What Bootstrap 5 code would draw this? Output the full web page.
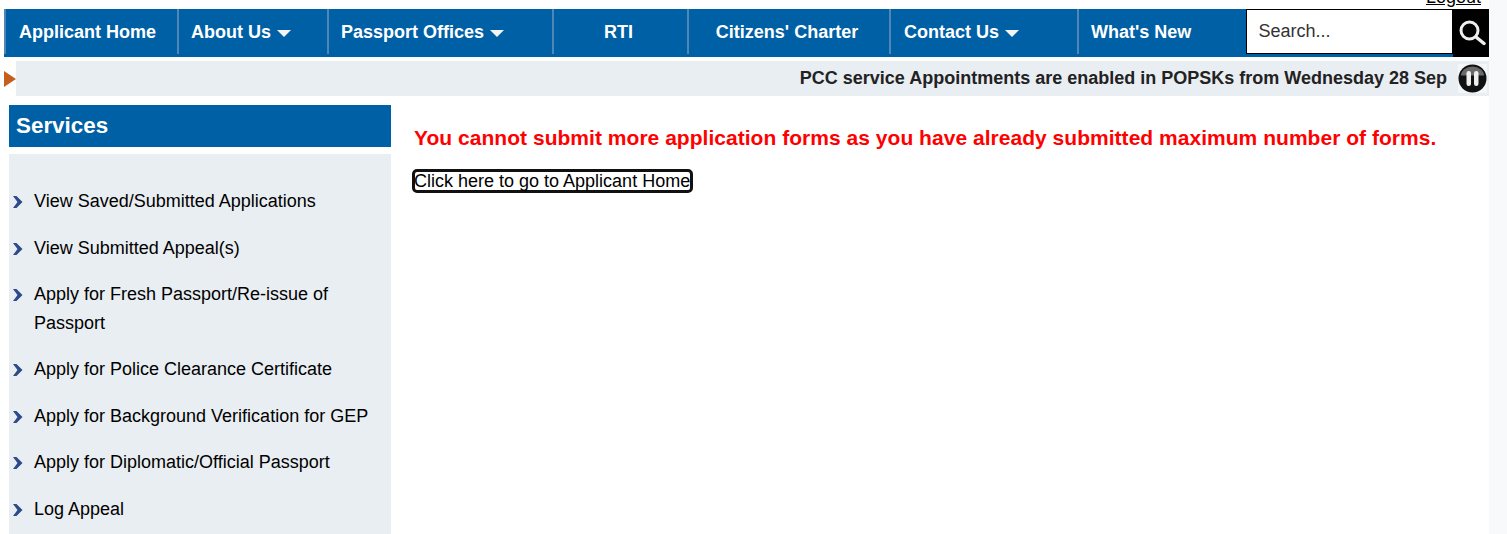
<!DOCTYPE html>
<html lang="en"><head><meta charset="utf-8"><title>Passport Seva</title>
<link href="https://cdn.jsdelivr.net/npm/bootstrap@5.3.0/dist/css/bootstrap.min.css" rel="stylesheet">
<style>
html,body{height:534px;overflow:hidden;background:#fff}
body{font-family:"Liberation Sans",Arial,sans-serif;color:#000;font-size:18px}
.gutter-strip{width:18px;background:#f8f9fa;flex:none}
.page-shell{width:1507px;height:534px;overflow:hidden}
.page-main{width:1489px;padding-left:4px;flex:none}
.logout-row{height:9px;position:relative}
.logout-link{position:absolute;right:8px;top:-14px;font-size:18px;line-height:22px;color:#000}
.top-nav{height:48px;background:#0060a5;align-items:flex-start}
.nav-cell{height:45px;display:flex;align-items:center;padding-left:13px;padding-top:1px;color:#fff;font-weight:700;font-size:18px;border-right:2px solid #4f86b8;text-decoration:none;white-space:nowrap;flex:none}
.nav-cell.centered{justify-content:center;padding-left:0;padding-right:4px}
.w1{width:175px;border-left:2px solid #4f86b8}.w2{width:150px;padding-left:12px}.w3{width:225px;padding-left:12px}.w4{width:135px}.w5{width:202px}.w6{width:188px}.w7{width:167px;border-right:0;padding-left:12px}
.caret-mark{display:inline-block;margin-left:6px;margin-top:2px;width:0;height:0;border-left:7.5px solid transparent;border-right:7.5px solid transparent;border-top:7px solid #f4f4f4}
.search-box{width:207px;height:45px;border:1px solid #000;background:#fff;padding:0 11.500px;font-size:18px;color:#333;flex:none;line-height:41px;outline:0;border-radius:0}
.search-box::placeholder{color:#333;opacity:1}
.search-btn{width:36px;height:48px;background:#000;flex:none;border:0;padding:0 0 1px 1px;display:flex;align-items:center;justify-content:center}
.ticker-row{margin-top:4px;height:35px}
.ticker-arrow{width:12px;flex:none;display:flex;align-items:center}
.ticker-body{background:#e9eef2;flex:1;height:35px;font-weight:700;color:#222;font-size:18px;padding-right:2px}
.pause-icon{margin-left:11px;flex:none}
.content-row{margin-top:9px;padding-left:5px}
.side-col{width:382px;flex:none}
.side-head{height:42px;background:#0060a5;color:#fff;font-weight:700;font-size:22.400px;line-height:41px;padding-left:7px}
.side-panel{margin-top:7px;background:#e9eef2;height:400px;padding-top:32.500px}
.side-item{position:relative;padding-left:25px;line-height:29px;color:#000;margin-bottom:17.600px;font-size:18px}
.side-item:first-child{margin-bottom:18.200px}
.side-item:nth-child(2){margin-bottom:17px}
.side-item svg{position:absolute;left:3px;top:8px}
.msg-col{padding-left:23px;padding-top:20px}
.err-msg{color:#f00;font-weight:700;font-size:21px;line-height:26px;letter-spacing:.03px;margin:0}
.home-link{display:inline-block;margin:18px 0 0 -2px;color:#000;text-decoration:none;border:3px solid #111;border-radius:5px;line-height:18px;font-size:18px;padding:0;height:24px;white-space:nowrap;text-indent:-1px}
</style></head>
<body>
<div class="page-shell d-flex">
<div class="page-main">
  <div class="logout-row"><a href="#" class="logout-link">Logout</a></div>
  <nav class="top-nav d-flex">
    <a href="#" class="nav-cell w1">Applicant Home</a>
    <a href="#" class="nav-cell w2">About Us<span class="caret-mark"></span></a>
    <a href="#" class="nav-cell w3">Passport Offices<span class="caret-mark"></span></a>
    <a href="#" class="nav-cell centered w4">RTI</a>
    <a href="#" class="nav-cell centered w5">Citizens' Charter</a>
    <a href="#" class="nav-cell w6">Contact Us<span class="caret-mark"></span></a>
    <a href="#" class="nav-cell w7">What's New</a>
    <input class="search-box" type="text" placeholder="Search...">
    <button class="search-btn" type="button" aria-label="Search">
      <svg width="28" height="26" viewBox="0 0 28 26"><circle cx="11.500" cy="10.500" r="8.500" fill="none" stroke="#eee" stroke-width="3"/><path d="M18 17l8 6.500" stroke="#eee" stroke-width="3.500" stroke-linecap="round"/></svg>
    </button>
  </nav>
  <div class="ticker-row d-flex">
    <div class="ticker-arrow"><svg width="12" height="16" viewBox="0 0 12 16"><path d="M0 0l12 8-12 8z" fill="#c55f1e"/></svg></div>
    <div class="ticker-body d-flex align-items-center justify-content-end">
      <span>PCC service Appointments are enabled in POPSKs from Wednesday 28 Sep</span>
      <svg class="pause-icon" width="29" height="29" viewBox="0 0 29 29"><rect width="29" height="29" fill="#f4f6f7"/><circle cx="14.500" cy="14.500" r="14" fill="#111"/><path d="M3 11.500a11.500 9 0 0 1 23 0z" fill="#6a6a6a"/><rect x="8.500" y="7" width="4.500" height="15" rx="2.200" fill="#eee"/><rect x="16" y="7" width="4.500" height="15" rx="2.200" fill="#eee"/></svg>
    </div>
  </div>
  <div class="content-row d-flex">
    <aside class="side-col">
      <div class="side-head">Services</div>
      <div class="side-panel">
        <div class="side-item"><svg width="12" height="14" viewBox="0 0 12 14"><path d="M1 1h3.500l6 6-6 6H1l4.500-6z" fill="#2d4a8a"/></svg>View Saved/Submitted Applications</div>
        <div class="side-item"><svg width="12" height="14" viewBox="0 0 12 14"><path d="M1 1h3.500l6 6-6 6H1l4.500-6z" fill="#2d4a8a"/></svg>View Submitted Appeal(s)</div>
        <div class="side-item"><svg width="12" height="14" viewBox="0 0 12 14"><path d="M1 1h3.500l6 6-6 6H1l4.500-6z" fill="#2d4a8a"/></svg>Apply for Fresh Passport/Re-issue of Passport</div>
        <div class="side-item"><svg width="12" height="14" viewBox="0 0 12 14"><path d="M1 1h3.500l6 6-6 6H1l4.500-6z" fill="#2d4a8a"/></svg>Apply for Police Clearance Certificate</div>
        <div class="side-item"><svg width="12" height="14" viewBox="0 0 12 14"><path d="M1 1h3.500l6 6-6 6H1l4.500-6z" fill="#2d4a8a"/></svg>Apply for Background Verification for GEP</div>
        <div class="side-item"><svg width="12" height="14" viewBox="0 0 12 14"><path d="M1 1h3.500l6 6-6 6H1l4.500-6z" fill="#2d4a8a"/></svg>Apply for Diplomatic/Official Passport</div>
        <div class="side-item"><svg width="12" height="14" viewBox="0 0 12 14"><path d="M1 1h3.500l6 6-6 6H1l4.500-6z" fill="#2d4a8a"/></svg>Log Appeal</div>
      </div>
    </aside>
    <main class="msg-col flex-grow-1">
      <p class="err-msg">You cannot submit more application forms as you have already submitted maximum number of forms.</p>
      <a href="#" class="home-link">Click here to go to Applicant Home</a>
    </main>
  </div>
</div>
<div class="gutter-strip"></div>
</div>
<script src="https://cdn.jsdelivr.net/npm/bootstrap@5.3.0/dist/js/bootstrap.bundle.min.js"></script>
</body></html>
